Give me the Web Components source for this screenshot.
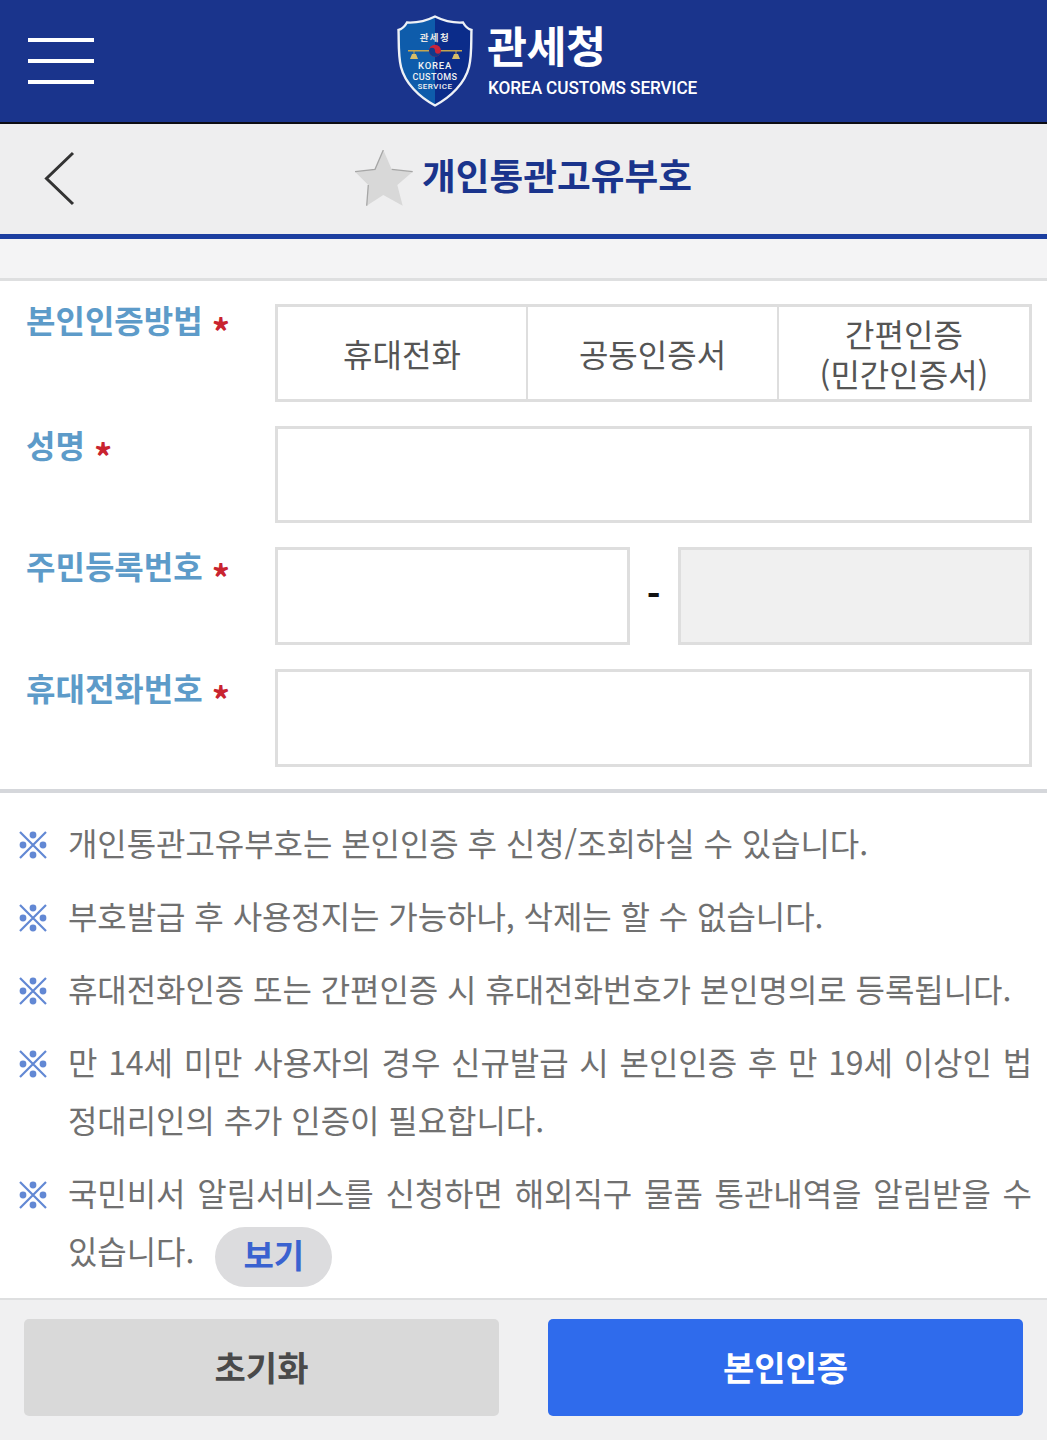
<!DOCTYPE html>
<html lang="ko">
<head>
<meta charset="utf-8">
<title>개인통관고유부호</title>
<style>
    html, body {
        margin: 0;
        background: #fff;
        font-family: "Noto Sans CJK KR", "Noto Sans", sans-serif;
    }

    body {
        height: 1440px;
        overflow: hidden;
        display: flex;
        flex-direction: column;
    }

    .band {
        height: 39px;
        flex: none;
        background: #f4f4f5;
    }

    notice-list {
        flex: 1;
    }
</style>
</head>
<body>
<kcs-header></kcs-header>
<kcs-title-bar>개인통관고유부호</kcs-title-bar>
<div class="band"></div>

<auth-form>
    <form-row label="본인인증방법">
        <method-tabs></method-tabs>
    </form-row>
    <form-row label="성명">
        <text-box></text-box>
    </form-row>
    <form-row label="주민등록번호">
        <text-box></text-box>
        <span slot="sep">-</span>
        <text-box disabled></text-box>
    </form-row>
    <form-row label="휴대전화번호">
        <text-box></text-box>
    </form-row>
</auth-form>

<notice-list>
    <notice-item>개인통관고유부호는 본인인증 후 신청/조회하실 수 있습니다.</notice-item>
    <notice-item>부호발급 후 사용정지는 가능하나, 삭제는 할 수 없습니다.</notice-item>
    <notice-item>휴대전화인증 또는 간편인증 시 휴대전화번호가 본인명의로 등록됩니다.</notice-item>
    <notice-item>만 14세 미만 사용자의 경우 신규발급 시 본인인증 후 만 19세 이상인 법정대리인의 추가 인증이 필요합니다.</notice-item>
    <notice-item>국민비서 알림서비스를 신청하면 해외직구 물품 통관내역을 알림받을 수 있습니다. <pill-button>보기</pill-button></notice-item>
</notice-list>

<action-bar></action-bar>

<script>
class KcsHeader extends HTMLElement {
    constructor() {
        super();
        this.attachShadow({ mode: 'open' }).innerHTML = `
            <style>
                :host {
                    display: flex;
                    align-items: center;
                    flex: none;
                    box-sizing: border-box;
                    height: 124px;
                    background: #1a348c;
                    border-bottom: 2px solid #0c0c14;
                }

                .menu {
                    display: flex;
                    flex-direction: column;
                    gap: 17px;
                    width: 66px;
                    margin-left: 28px;
                }

                .menu i {
                    display: block;
                    height: 4px;
                    background: #fff;
                }

                .brand {
                    display: flex;
                    align-items: center;
                    margin-left: 303px;
                    gap: 14px;
                    color: #fff;
                }

                .names {
                    display: flex;
                    flex-direction: column;
                    margin-top: -2px;
                }

                .ko {
                    font-size: 43.500px;
                    line-height: 50px;
                    font-weight: 700;
                    letter-spacing: -0.5px;
                }

                .en {
                    font-family: "Roboto", sans-serif;
                    font-size: 19px;
                    line-height: 24px;
                    font-weight: 500;
                    margin-top: 6px;
                    margin-left: 1px;
                    white-space: nowrap;
                    letter-spacing: -0.1px;
                    transform: scaleX(.905);
                    transform-origin: left center;
                }

                svg {
                    display: block;
                }
            </style>
            <div class="menu"><i></i><i></i><i></i></div>
            <div class="brand">
                <svg width="76" height="92" viewBox="0 0 76 92">
                    <defs>
                        <linearGradient id="shield" x1="0" x2="1" y1="0" y2="0">
                            <stop offset="0" stop-color="#0e5cab"/>
                            <stop offset=".5" stop-color="#0e5cab"/>
                            <stop offset=".5" stop-color="#0b2c8a"/>
                            <stop offset="1" stop-color="#0b2c8a"/>
                        </linearGradient>
                    </defs>
                    <path d="M38 1.500 C30 5.500 19 8 10 7.500 C8 11 5 14 1.500 15 C2 25 1 40 4 52 C8 68 22 82 38 90.500 C54 82 68 68 72 52 C75 40 74 25 74.500 15 C71 14 68 11 66 7.500 C57 8 46 5.500 38 1.500Z" fill="url(#shield)" stroke="#eef1f6" stroke-width="2.400"/>
                    <text x="38" y="26" text-anchor="middle" fill="#e6e6e6" font-size="9.500" font-weight="700" letter-spacing="1.500">관세청</text>
                    <path d="M11 35.700H65" stroke="#c4a650" stroke-width="1.500"/>
                    <path d="M17 36V40M59 36V40" stroke="#c4a650" stroke-width="1"/>
                    <path d="M13 44h8l-2 -5h-4ZM55 44h8l-2 -5h-4Z" fill="#d6bd68"/>
                    <circle cx="38" cy="35.700" r="6" fill="#c9243a"/>
                    <path d="M32 35.700a6 6 0 0 0 12 0a3 3 0 0 1 -6 0a3 3 0 0 0 -6 0Z" fill="#123a8a"/>
                    <text x="38" y="54" text-anchor="middle" fill="#f2f2f2" font-family="Roboto, sans-serif" font-size="9.500" font-weight="500" letter-spacing=".8">KOREA</text>
                    <text x="38" y="64.500" text-anchor="middle" fill="#f2f2f2" font-family="Roboto, sans-serif" font-size="9" font-weight="500" letter-spacing=".4">CUSTOMS</text>
                    <text x="38" y="73.500" text-anchor="middle" fill="#f2f2f2" font-family="Roboto, sans-serif" font-size="8" font-weight="500" letter-spacing=".5">SERVICE</text>
                </svg>
                <div class="names">
                    <span class="ko">관세청</span>
                    <span class="en">KOREA CUSTOMS SERVICE</span>
                </div>
            </div>
        `;
    }
}

class KcsTitleBar extends HTMLElement {
    constructor() {
        super();
        this.attachShadow({ mode: 'open' }).innerHTML = `
            <style>
                :host {
                    display: flex;
                    align-items: center;
                    flex: none;
                    box-sizing: border-box;
                    height: 115px;
                    padding-bottom: 4px;
                    background: #eeeeef;
                    border-bottom: 5px solid #1c3fa0;
                }

                .back {
                    display: block;
                    margin-left: 44px;
                    margin-top: 3px;
                }

                .star {
                    display: block;
                    margin-left: 279px;
                    margin-top: 4px;
                }

                .title {
                    margin-left: 7px;
                    font-size: 36.700px;
                    line-height: 50px;
                    font-weight: 700;
                    color: #1a348c;
                    white-space: nowrap;
                    margin-top: -6px;
                }
            </style>
            <svg class="back" width="32" height="56" viewBox="0 0 32 56">
                <path d="M29 2 L2.500 27.500 L29 53" fill="none" stroke="#333" stroke-width="3"/>
            </svg>
            <svg class="star" width="60" height="58" viewBox="0 0 60 58">
                <path d="M28.300 0 L36.700 19.300 L57.700 21.700 L42.300 35 L47.700 55.700 L28.300 45 L11.700 55.700 L13.300 35 L0 21.700 L20 19.300Z" fill="#d8d8d8"/>
                <path d="M28.300 0 L20 19.300 L0 21.700 M36.700 19.300 L57.700 21.700 M13.300 35 L11.700 55.700" fill="none" stroke="#a6a6a6" stroke-width="1.300"/>
            </svg>
            <span class="title"><slot></slot></span>
        `;
    }
}

class AuthForm extends HTMLElement {
    constructor() {
        super();
        this.attachShadow({ mode: 'open' }).innerHTML = `
            <style>
                :host {
                    display: flex;
                    flex-direction: column;
                    flex: none;
                    gap: 24.100px;
                    box-sizing: border-box;
                    padding: 23px 15px 22px 26px;
                    border-top: 3px solid #dedfe0;
                    border-bottom: 4px solid #d5d7db;
                }
            </style>
            <slot></slot>
        `;
    }
}

class FormRow extends HTMLElement {
    constructor() {
        super();
        const label = this.getAttribute('label');
        this.attachShadow({ mode: 'open' }).innerHTML = `
            <style>
                :host {
                    display: grid;
                    grid-template-columns: 249px 1fr;
                    align-items: start;
                }

                .label {
                    display: flex;
                    gap: 9px;
                    margin-top: 1px;
                    font-size: 32px;
                    line-height: 34px;
                    font-weight: 700;
                    color: #5d9bc9;
                    white-space: nowrap;
                }

                :host(:first-child) .label {
                    margin-top: -2px;
                }

                .label b {
                    color: #c9242f;
                    font-size: 36px;
                    font-weight: 700;
                    line-height: 56px;
                }

                .fields {
                    display: flex;
                    align-items: center;
                }

                ::slotted(text-box) {
                    flex: 1;
                }

                ::slotted([slot="sep"]) {
                    flex: 0 0 48px;
                    text-align: center;
                    font-size: 37px;
                    line-height: 34px;
                    font-weight: 700;
                    color: #111;
                    margin-top: -7px;
                }
            </style>
            <div class="label"><span>${label}</span><b>*</b></div>
            <div class="fields"><slot></slot><slot name="sep"></slot><slot name="after"></slot></div>
        `;
    }

    connectedCallback() {
        const last = this.querySelector('text-box[disabled]');
        if (last) last.slot = 'after';
    }
}

class TextBox extends HTMLElement {
    constructor() {
        super();
        this.attachShadow({ mode: 'open' }).innerHTML = `
            <style>
                :host {
                    display: block;
                    box-sizing: border-box;
                    height: 97.600px;
                    border: 3px solid #dedede;
                    background: #fff;
                }

                :host([disabled]) {
                    background: #f0f0f0;
                }
            </style>
        `;
    }
}

class MethodTabs extends HTMLElement {
    constructor() {
        super();
        this.attachShadow({ mode: 'open' }).innerHTML = `
            <style>
                :host {
                    display: grid;
                    grid-template-columns: 248px 251px 1fr;
                    box-sizing: border-box;
                    height: 97.600px;
                    width: 100%;
                    border: 3px solid #dedede;
                    color: #555;
                }

                div {
                    display: flex;
                    align-items: center;
                    justify-content: center;
                    text-align: center;
                    padding-top: 1px;
                    font-size: 32px;
                    line-height: 40px;
                    font-weight: 400;
                }

                div + div {
                    border-left: 2px solid #dedede;
                }
            </style>
            <div>휴대전화</div>
            <div>공동인증서</div>
            <div>간편인증<br>(민간인증서)</div>
        `;
    }
}

class NoticeList extends HTMLElement {
    constructor() {
        super();
        this.attachShadow({ mode: 'open' }).innerHTML = `
            <style>
                :host {
                    display: flex;
                    flex-direction: column;
                    gap: 15px;
                    padding: 20px 15px 0 18px;
                }
            </style>
            <slot></slot>
        `;
    }
}

class NoticeItem extends HTMLElement {
    constructor() {
        super();
        this.attachShadow({ mode: 'open' }).innerHTML = `
            <style>
                :host {
                    display: flex;
                    font-size: 32px;
                    line-height: 58px;
                    font-weight: 400;
                    letter-spacing: -0.07px;
                    color: #707070;
                }

                svg {
                    flex: none;
                    margin-top: 18px;
                    margin-right: 20px;
                }

                .text {
                    flex: 1;
                    word-break: break-all;
                    text-align: justify;
                }
            </style>
            <svg width="30" height="28" viewBox="0 0 30 28">
                <path d="M2 1 L28 27 M28 1 L2 27" stroke="#6288d4" stroke-width="2.200"/>
                <circle cx="15" cy="4" r="3.400" fill="#6288d4"/>
                <circle cx="15" cy="24" r="3.400" fill="#6288d4"/>
                <circle cx="5" cy="14" r="3.400" fill="#6288d4"/>
                <circle cx="25" cy="14" r="3.400" fill="#6288d4"/>
            </svg>
            <div class="text"><slot></slot></div>
        `;
    }
}

class PillButton extends HTMLElement {
    constructor() {
        super();
        this.attachShadow({ mode: 'open' }).innerHTML = `
            <style>
                :host {
                    display: inline-block;
                    width: 117px;
                    height: 60px;
                    margin-left: 12px;
                    margin-top: 4px;
                    border-radius: 30px;
                    background: #dcdcde;
                    color: #3a62d0;
                    font-size: 33px;
                    line-height: 54px;
                    font-weight: 700;
                    text-align: center;
                    vertical-align: middle;
                }
            </style>
            <slot></slot>
        `;
    }
}

class ActionBar extends HTMLElement {
    constructor() {
        super();
        this.attachShadow({ mode: 'open' }).innerHTML = `
            <style>
                :host {
                    display: grid;
                    grid-template-columns: 475px 475px;
                    justify-content: space-between;
                    flex: none;
                    box-sizing: border-box;
                    height: 142px;
                    padding: 19px 24px 24px;
                    background: #f0f0f1;
                    border-top: 2px solid #dedfe0;
                }

                button {
                    border: 0;
                    border-radius: 5px;
                    padding: 0 0 3px;
                    font-family: inherit;
                    font-size: 34px;
                    font-weight: 700;
                }

                .reset {
                    background: #d9d9d9;
                    color: #4a4a4a;
                }

                .confirm {
                    background: #2f6bec;
                    color: #fff;
                }
            </style>
            <button class="reset">초기화</button>
            <button class="confirm">본인인증</button>
        `;
    }
}

window.customElements.define('kcs-header', KcsHeader);
window.customElements.define('kcs-title-bar', KcsTitleBar);
window.customElements.define('auth-form', AuthForm);
window.customElements.define('form-row', FormRow);
window.customElements.define('text-box', TextBox);
window.customElements.define('method-tabs', MethodTabs);
window.customElements.define('notice-list', NoticeList);
window.customElements.define('notice-item', NoticeItem);
window.customElements.define('pill-button', PillButton);
window.customElements.define('action-bar', ActionBar);
</script>
</body>
</html>
